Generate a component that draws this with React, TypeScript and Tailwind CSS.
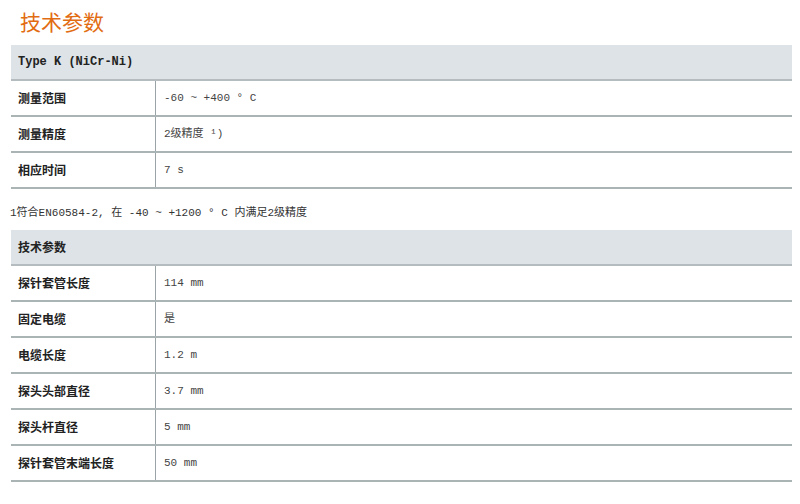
import React from 'react';

interface Row {
  label: string;
  value: string;
}

const typeRows: Row[] = [
  { label: '测量范围', value: '-60 ~ +400 ° C' },
  { label: '测量精度', value: '2级精度 ¹)' },
  { label: '相应时间', value: '7 s' },
];

const techRows: Row[] = [
  { label: '探针套管长度', value: '114 mm' },
  { label: '固定电缆', value: '是' },
  { label: '电缆长度', value: '1.2 m' },
  { label: '探头头部直径', value: '3.7 mm' },
  { label: '探头杆直径', value: '5 mm' },
  { label: '探针套管末端长度', value: '50 mm' },
];

const mono = "font-['Liberation_Mono','Noto_Sans_CJK_SC',monospace]";
const sans = "font-['Noto_Sans_CJK_SC','Liberation_Sans',sans-serif]";

function SpecTable({ title, rows, monoTitle }: { title: string; rows: Row[]; monoTitle?: boolean }) {
  return (
    <div className="w-[781px]">
      <div className="h-[36px] bg-[#dde3e6] border-b-2 border-[#b4bcbf] flex items-center pl-[7px]">
        <span className={`text-[12px] font-bold text-[#222] ${monoTitle ? mono : sans}`}>{title}</span>
      </div>
      {rows.map((r) => (
        <div key={r.label} className="h-[36px] flex border-b-2 border-[#aab4b4]">
          <div className="w-[145px] border-r border-[#9aa4a6] flex items-center pl-[7px]">
            <span className={`text-[12px] font-bold text-[#222] ${sans}`}>{r.label}</span>
          </div>
          <div className="flex-1 flex items-center pl-[8px]">
            <span className={`text-[11px] text-[#444] ${mono}`}>{r.value}</span>
          </div>
        </div>
      ))}
    </div>
  );
}

export default function App() {
  return (
    <div className="w-[800px] h-[504px] bg-white overflow-hidden">
      <h1 className={`pt-[7px] pl-[20px] h-[45px] text-[21px] leading-[29px] text-[#e26c12] ${sans}`}>技术参数</h1>
      <div className="pl-[11px]">
        <SpecTable title="Type K (NiCr-Ni)" rows={typeRows} monoTitle />
        <p className={`h-[41px] pt-[17px] ml-[-1px] text-[11px] leading-[14px] text-[#333] ${mono}`}>
          1符合EN60584-2, 在 -40 ~ +1200 ° C 内满足2级精度
        </p>
        <SpecTable title="技术参数" rows={techRows} />
      </div>
    </div>
  );
}
